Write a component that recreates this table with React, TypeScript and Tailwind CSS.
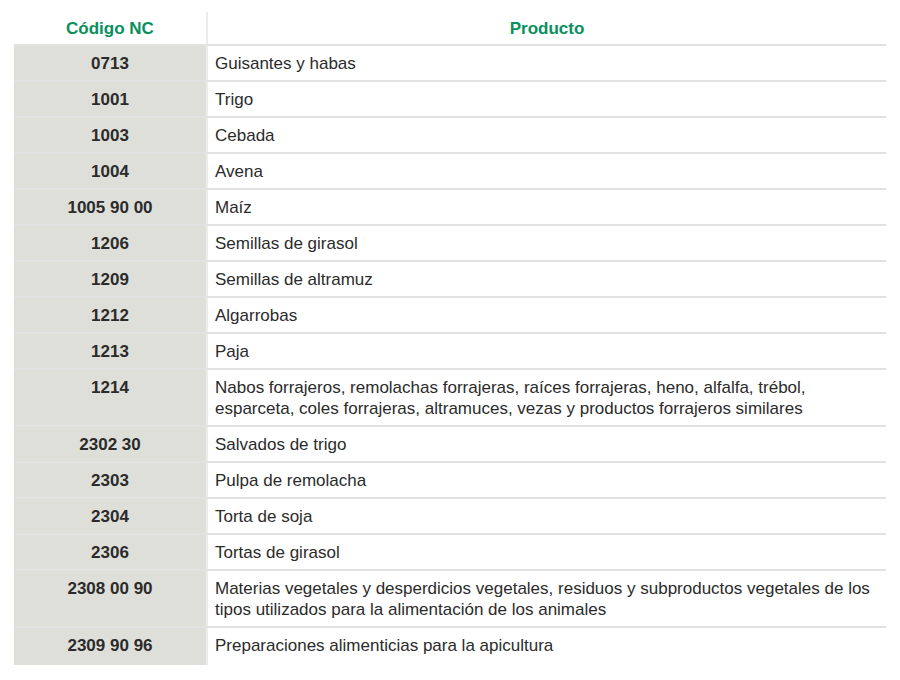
import React from "react";

const rows: [string, string][] = [
  ["0713", "Guisantes y habas"],
  ["1001", "Trigo"],
  ["1003", "Cebada"],
  ["1004", "Avena"],
  ["1005 90 00", "Maíz"],
  ["1206", "Semillas de girasol"],
  ["1209", "Semillas de altramuz"],
  ["1212", "Algarrobas"],
  ["1213", "Paja"],
  ["1214", "Nabos forrajeros, remolachas forrajeras, raíces forrajeras, heno, alfalfa, trébol, esparceta, coles forrajeras, altramuces, vezas y productos forrajeros similares"],
  ["2302 30", "Salvados de trigo"],
  ["2303", "Pulpa de remolacha"],
  ["2304", "Torta de soja"],
  ["2306", "Tortas de girasol"],
  ["2308 00 90", "Materias vegetales y desperdicios vegetales, residuos y subproductos vegetales de los tipos utilizados para la alimentación de los animales"],
  ["2309 90 96", "Preparaciones alimenticias para la apicultura"],
];

export default function App() {
  return (
    <div
      className="w-[900px] h-[680px] bg-white pt-[12px] pl-[14px]"
      style={{ fontFamily: '"Liberation Sans", Arial, sans-serif' }}
    >
      <div className="w-[872px] text-[17px] leading-[21px] text-[#2b2b2b]">
        <div className="flex border-b-2 border-[#e2e2e2]">
          <div className="w-[192px] shrink-0 h-[32px] flex items-center justify-center font-bold text-[#07905e]">
            Código NC
          </div>
          <div className="flex-1 h-[32px] flex items-center justify-center font-bold text-[#07905e] border-l-2 border-[#ececec]">
            Producto
          </div>
        </div>
        {rows.map(([code, prod], i) => {
          const last = i === rows.length - 1;
          return (
            <div
              key={code}
              className={"flex " + (last ? "" : "border-b-2 border-[#e2e2e2]")}
            >
              <div
                className={
                  "w-[192px] shrink-0 bg-[#dfdfda] text-center font-bold pt-[7px] " +
                  (last ? "pb-[9px]" : "pb-[6px]")
                }
              >
                {code}
              </div>
              <div className="flex-1 border-l-2 border-[#ececec] pl-[7px] pr-[8px] pt-[7px] pb-[6px]">
                {prod}
              </div>
            </div>
          );
        })}
      </div>
    </div>
  );
}
